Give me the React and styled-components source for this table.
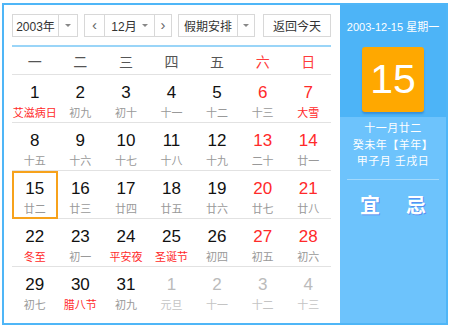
import React from 'react';
import styled, { createGlobalStyle } from 'styled-components';

const GlobalStyle = createGlobalStyle`
  body {
    margin: 0;
    background: #fff;
    font-family: 'Liberation Sans', 'Noto Sans CJK SC', sans-serif;
  }
`;

const Frame = styled.div`
  display: flex;
  width: 446px;
  height: 322px;
  margin: 3px 0 0 2px;
  border: 2px solid #4fb6f7;
  box-sizing: border-box;
  background: #fff;
`;

const Main = styled.div`
  width: 336px;
  padding: 9px 0 0 8px;
  box-sizing: border-box;
`;

const Toolbar = styled.div`
  display: flex;
  align-items: stretch;
  gap: 6px;
  width: 319px;
  height: 23px;
  font-size: 12px;
  color: #333;
`;

const Box = styled.div`
  display: flex;
  align-items: stretch;
  border: 1px solid #d8d8d8;
  background: #fff;
  box-sizing: border-box;
`;

const Part = styled.div`
  display: flex;
  align-items: center;
  justify-content: center;
  width: ${p => p.w}px;
  border-left: ${p => (p.divided ? '1px solid #d8d8d8' : 'none')};
  box-sizing: border-box;
  gap: 5px;
`;

const Chevron = styled.span`
  font-size: 15px;
  color: #666;
  line-height: 1;
  margin-top: -2px;
`;

const Caret = styled.span`
  width: 0;
  height: 0;
  border-left: 3px solid transparent;
  border-right: 3px solid transparent;
  border-top: 3px solid #888;
`;

const TodayButton = styled(Box)`
  margin-left: auto;
  width: 68px;
  align-items: center;
  justify-content: center;
`;

const Rule = styled.div`
  width: 319px;
  height: 2px;
  margin-top: 8px;
  background: #9ad5f8;
`;

const Week = styled.div`
  display: grid;
  grid-template-columns: repeat(7, 1fr);
  width: 319px;
  height: ${p => (p.head ? 28 : 48)}px;
  border-bottom: ${p => (p.last ? 'none' : '1px solid #e2e2e2')};
  box-sizing: border-box;
`;

const HeadCell = styled.div`
  display: flex;
  align-items: center;
  justify-content: center;
  padding-top: 1px;
  font-size: 14px;
  color: ${p => (p.weekend ? '#ff3b3b' : '#555')};
`;

const Day = styled.div`
  display: flex;
  flex-direction: column;
  align-items: center;
  padding-top: 9px;
  box-sizing: border-box;
  box-shadow: ${p => (p.selected ? 'inset 0 0 0 2px #f7a21b' : 'none')};
  height: ${p => (p.selected ? '48px' : 'auto')};
`;

const Num = styled.div`
  font-size: 17px;
  line-height: 18px;
  color: ${p => (p.other ? '#bbb' : p.red ? '#ff2a2a' : '#111')};
`;

const Lunar = styled.div`
  margin-top: 4px;
  font-size: 11px;
  line-height: 14px;
  white-space: nowrap;
  color: ${p => (p.other ? '#c4c4c4' : p.red ? '#ff2a2a' : '#999')};
`;

const Side = styled.div`
  flex: 1;
  display: flex;
  flex-direction: column;
  background: #6dc3fc;
  color: #fff;
`;

const SideTop = styled.div`
  display: flex;
  flex-direction: column;
  align-items: center;
  height: 112px;
  background: #4db4f7;
`;

const DateLine = styled.div`
  margin-top: 14px;
  font-size: 11px;
  line-height: 16px;
  white-space: nowrap;
`;

const BigDay = styled.div`
  display: flex;
  align-items: center;
  justify-content: center;
  width: 62px;
  height: 65px;
  margin-top: 12px;
  border-radius: 3px;
  background: #ffa800;
  box-shadow: 0 2px 2px rgba(20, 80, 160, 0.35);
  font-size: 41px;
  color: #fff;
`;

const LunarInfo = styled.div`
  display: flex;
  flex-direction: column;
  align-items: center;
  padding-top: 3px;
  font-size: 11px;
  line-height: 16.5px;
  letter-spacing: 0.5px;
  white-space: nowrap;
`;

const SideRule = styled.div`
  height: 1px;
  margin: 9px 7px 0;
  background: #a3d9fc;
`;

const Advice = styled.div`
  display: flex;
  justify-content: center;
  gap: 26px;
  margin-top: 10px;
  font-size: 20px;
  font-weight: bold;
  text-shadow: 1px 1px 0 #5a8ff0;
`;

const weekdays = ['一', '二', '三', '四', '五', '六', '日'];

const weeks = [
  [[1, '艾滋病日', 1], [2, '初九'], [3, '初十'], [4, '十一'], [5, '十二'], [6, '十三'], [7, '大雪', 1]],
  [[8, '十五'], [9, '十六'], [10, '十七'], [11, '十八'], [12, '十九'], [13, '二十'], [14, '廿一']],
  [[15, '廿二'], [16, '廿三'], [17, '廿四'], [18, '廿五'], [19, '廿六'], [20, '廿七'], [21, '廿八']],
  [[22, '冬至', 1], [23, '初一'], [24, '平安夜', 1], [25, '圣诞节', 1], [26, '初四'], [27, '初五'], [28, '初六']],
  [[29, '初七'], [30, '腊八节', 1], [31, '初九'], [1, '元旦', 0, 1], [2, '十一', 0, 1], [3, '十二', 0, 1], [4, '十三', 0, 1]],
];

const App = () => {
  return (
    <>
      <GlobalStyle />
      <Frame>
        <Main>
          <Toolbar>
            <Box>
              <Part w={45}>2003年</Part>
              <Part w={19} divided>
                <Caret />
              </Part>
            </Box>
            <Box>
              <Part w={19}>
                <Chevron>&lsaquo;</Chevron>
              </Part>
              <Part w={50} divided>
                12月 <Caret />
              </Part>
              <Part w={17} divided>
                <Chevron>&rsaquo;</Chevron>
              </Part>
            </Box>
            <Box>
              <Part w={58}>假期安排</Part>
              <Part w={17} divided>
                <Caret />
              </Part>
            </Box>
            <TodayButton>返回今天</TodayButton>
          </Toolbar>
          <Rule />
          <Week head>
            {weekdays.map((w, i) => (
              <HeadCell key={w} weekend={i > 4}>
                {w}
              </HeadCell>
            ))}
          </Week>
          {weeks.map((week, r) => (
            <Week key={r} last={r === weeks.length - 1}>
              {week.map(([n, lunar, fest, other], c) => (
                <Day key={c} selected={n === 15 && !other}>
                  <Num red={c > 4} other={other}>
                    {n}
                  </Num>
                  <Lunar red={fest} other={other}>
                    {lunar}
                  </Lunar>
                </Day>
              ))}
            </Week>
          ))}
        </Main>
        <Side>
          <SideTop>
            <DateLine>2003-12-15 星期一</DateLine>
            <BigDay>15</BigDay>
          </SideTop>
          <LunarInfo>
            <div>十一月廿二</div>
            <div>癸未年【羊年】</div>
            <div>甲子月 壬戌日</div>
          </LunarInfo>
          <SideRule />
          <Advice>
            <span>宜</span>
            <span>忌</span>
          </Advice>
        </Side>
      </Frame>
    </>
  );
};

export default App;
